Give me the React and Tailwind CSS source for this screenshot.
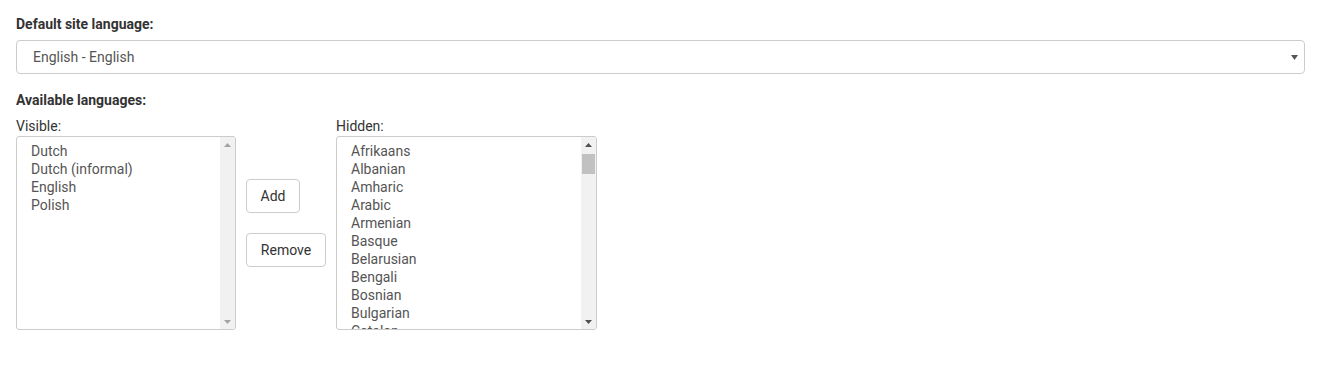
import { useState } from 'react';

const visibleLangs = ['Dutch', 'Dutch (informal)', 'English', 'Polish'];

const hiddenLangs = [
  'Afrikaans',
  'Albanian',
  'Amharic',
  'Arabic',
  'Armenian',
  'Basque',
  'Belarusian',
  'Bengali',
  'Bosnian',
  'Bulgarian',
  'Catalan',
];

function Scrollbar({ disabled, thumb }) {
  const arrow = disabled ? '#a3a3a3' : '#505050';
  return (
    <div className="flex w-[15px] shrink-0 flex-col bg-[#f1f1f1]">
      <div className="flex h-[15px] items-center justify-center">
        <svg width="7" height="4" viewBox="0 0 7 4">
          <path d="M0 4 L3.5 0 L7 4 Z" fill={arrow} />
        </svg>
      </div>
      <div className="flex-1 px-[1px]">
        {thumb && <div className="mt-[2px] h-[20px] w-full bg-[#c1c1c1]" />}
      </div>
      <div className="flex h-[15px] items-center justify-center">
        <svg width="7" height="4" viewBox="0 0 7 4">
          <path d="M0 0 L7 0 L3.5 4 Z" fill={arrow} />
        </svg>
      </div>
    </div>
  );
}

function ListBox({ items, width, scrollable }) {
  return (
    <div
      className={`flex h-[194px] overflow-hidden rounded-[3px] border border-[#cccccc] bg-white ${width}`}
    >
      <ul className="flex-1 overflow-hidden pl-[14px] pt-[5px] text-[14px] leading-[18px] text-[#555555]">
        {items.map((item) => (
          <li key={item} className="whitespace-nowrap">
            {item}
          </li>
        ))}
      </ul>
      <Scrollbar disabled={!scrollable} thumb={scrollable} />
    </div>
  );
}

export default function App() {
  const [lang] = useState('English - English');

  return (
    <div
      className="min-h-[385px] bg-white px-[16px] pt-[14px] text-[14px] text-[#333333]"
      style={{ fontFamily: 'Roboto, "Liberation Sans", sans-serif' }}
    >
      <label className="block font-bold leading-[20px]">Default site language:</label>
      <div className="mt-[6px] flex h-[34px] w-[1289px] items-center justify-between rounded-[4px] border border-[#cccccc] bg-white pl-[16px] pr-[6px] text-[#555555]">
        <span>{lang}</span>
        <svg width="7" height="5" viewBox="0 0 7 5">
          <path d="M0 0 L7 0 L3.5 5 Z" fill="#555555" />
        </svg>
      </div>

      <label className="mt-[16px] block font-bold leading-[20px]">Available languages:</label>

      <div className="mt-[6px] flex">
        <div className="flex flex-col">
          <span className="leading-[20px]">Visible:</span>
          <ListBox items={visibleLangs} width="w-[220px]" scrollable={false} />
        </div>

        <div className="flex w-[100px] shrink-0 flex-col items-start gap-[20px] px-[10px] pt-[63px]">
          <button className="h-[34px] w-[54px] rounded-[4px] border border-[#cccccc] bg-white text-[14px] text-[#333333]">
            Add
          </button>
          <button className="h-[34px] w-[80px] rounded-[4px] border border-[#cccccc] bg-white text-[14px] text-[#333333]">
            Remove
          </button>
        </div>

        <div className="flex flex-col">
          <span className="leading-[20px]">Hidden:</span>
          <ListBox items={hiddenLangs} width="w-[261px]" scrollable />
        </div>
      </div>
    </div>
  );
}
